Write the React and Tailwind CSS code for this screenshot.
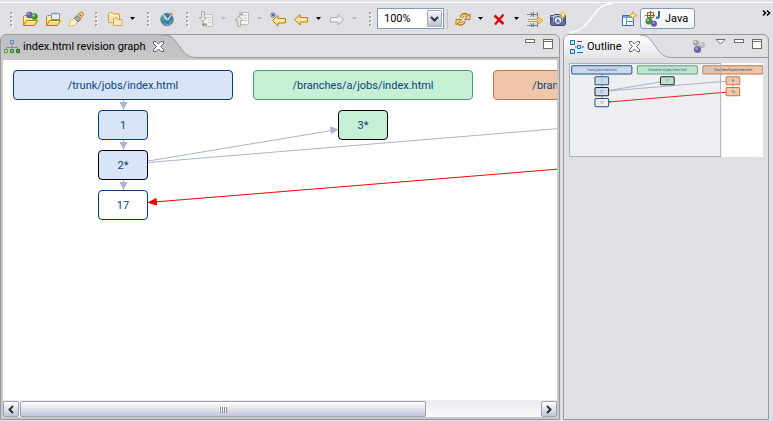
import React from "react";

/* ---------- revision graph data ---------- */

const HEADER_W = 220;
const NODE_W = 50;
const NODE_H = 30;

const PALETTE = {
  blue: { fill: "#d8e4f8", stroke: "#003f77" },
  green: { fill: "#c5f0d5", stroke: "#4ca066" },
  orange: { fill: "#f0c6aa", stroke: "#c07848" },
  blueMark: { fill: "#d8e4f8", stroke: "#000000" },
  greenMark: { fill: "#c5f0d5", stroke: "#000000" },
  plain: { fill: "#ffffff", stroke: "#003f77" },
};

const NODES = [
  { label: "/trunk/jobs/index.html", x: 10, y: 10, w: HEADER_W, tone: "blue" },
  { label: "/branches/a/jobs/index.html", x: 250, y: 10, w: HEADER_W, tone: "green" },
  { label: "/branches/b/jobs/index.html", x: 490, y: 10, w: HEADER_W, tone: "orange" },
  { label: "1", x: 95, y: 50, w: NODE_W, tone: "blue" },
  { label: "2*", x: 95, y: 90, w: NODE_W, tone: "blueMark" },
  { label: "17", x: 95, y: 130, w: NODE_W, tone: "plain" },
  { label: "3*", x: 335, y: 50, w: NODE_W, tone: "greenMark" },
  { label: "8", x: 575, y: 50, w: NODE_W, tone: "orange" },
  { label: "16", x: 575, y: 90, w: NODE_W, tone: "orange" },
];

function Edges() {
  return (
    <g>
      <g stroke="#acb4c8" fill="#acb4c8">
        <path d="M120.5 40V50M120.5 80V90M120.5 120V130M600.5 80V90" vectorEffect="non-scaling-stroke" />
        <path d="M117 42.5h7l-3.5 6zM117 82.5h7l-3.5 6zM117 122.5h7l-3.5 6z" />
        <path d="M145 101L335 69.5M145 102.5L575 67" fill="none" vectorEffect="non-scaling-stroke" />
        <path d="M327.5 67l7 2.5-6 4z" />
      </g>
      <path d="M145 142.500L575 107.500" fill="none" stroke="#ff0000" vectorEffect="non-scaling-stroke" />
      <path d="M153 138.500l-7.500 4 8 2.500z" fill="#ff0000" stroke="#ff0000" />
    </g>
  );
}

const NODE_CLASS = {
  blue: "bg-[#d8e4f8] border-[#003f77]",
  green: "bg-[#c5f0d5] border-[#4ca066]",
  orange: "bg-[#f0c6aa] border-[#c07848]",
  blueMark: "bg-[#d8e4f8] border-black",
  greenMark: "bg-[#c5f0d5] border-black",
  plain: "bg-white border-[#003f77]",
};

function GraphCanvas() {
  return (
    <div id="graph" className="relative min-h-[200px] flex-1 overflow-hidden bg-white">
      <svg className="absolute left-0 top-0" width="720" height="200" aria-hidden="true">
        <Edges />
      </svg>
      {NODES.filter((n) => n.x < 554).map((n) => (
        <div
          key={n.label}
          className={"absolute flex items-center justify-center rounded-[4px] border pt-[2px] text-[#0b4478] " + NODE_CLASS[n.tone]}
          style={{ left: n.x, top: n.y, width: n.w, height: NODE_H }}
        >
          {n.label}
        </div>
      ))}
    </div>
  );
}

function OutlineThumbnail() {
  return (
    <svg className="block w-[194px] bg-white leading-none" viewBox="0 0 710 344" role="img" aria-label="Graph overview">
      <Edges />
      {NODES.map((n) => (
        <g key={n.label}>
          <rect
            x={n.x}
            y={n.y}
            width={n.w}
            height={NODE_H}
            rx="4"
            fill={PALETTE[n.tone].fill}
            stroke={PALETTE[n.tone].stroke}
            vectorEffect="non-scaling-stroke"
          />
          <text x={n.x + n.w / 2} y={n.y + 19} textAnchor="middle" fontSize="11" fill="#0b4478">
            {n.label}
          </text>
        </g>
      ))}
      <rect x="2" y="2" width="553" height="340" fill="#a9adbd" fillOpacity="0.2" stroke="#a9adbd" vectorEffect="non-scaling-stroke" />
    </svg>
  );
}

/* ---------- icons ---------- */

function Icon({ children, size = 16 }) {
  return (
    <svg width={size} height={size} viewBox={`0 0 ${size} ${size}`} className="shrink-0" aria-hidden="true">
      {children}
    </svg>
  );
}

const OpenFolder = () => (
  <g>
    <path d="M1.500 14.500V5.500l1-1h4l1 1.500h6.500v3.500" fill="#fbe9b0" stroke="#c08a28" />
    <path d="M1.500 14.500l3-5h11l-3 5z" fill="#fbd98a" stroke="#b87818" />
    <path d="M5 10.500h9" stroke="#fff3cc" />
  </g>
);

const OpenTypeIcon = () => (
  <Icon>
    <OpenFolder />
    <circle cx="7.500" cy="4" r="3.300" fill="#6a5aa8" />
    <circle cx="6.500" cy="3" r="1.200" fill="#a89cd8" />
    <circle cx="12.500" cy="5.500" r="3.300" fill="#3c9048" />
    <circle cx="11.500" cy="4.500" r="1.200" fill="#98d898" />
  </Icon>
);

const OpenTaskIcon = () => (
  <Icon>
    <OpenFolder />
    <path d="M6.500 2.500h8v6h-8z" fill="#e4ecf8" stroke="#8090b8" />
    <path d="M9 1.500h3v2h-3z" fill="#98a4c0" />
  </Icon>
);

const SearchTorchIcon = () => (
  <Icon>
    <path d="M.500 15L2.500 9l4.500-1.500 2.500 3-3 4z" fill="#fdf4d0" stroke="#e8b850" />
    <path d="M6.500 7l2.500-2.500 4 3.500-3 3z" fill="#a4a8b4" stroke="#6c7080" />
    <path d="M9.500 4.500L12.500 1l2.500.500v3l-2.500 3z" fill="#f8c878" stroke="#c88828" />
    <path d="M11.500 3.500l1.500 1.500" stroke="#2858a8" />
  </Icon>
);

const FoldersIcon = () => (
  <Icon>
    <path d="M1.500 11.500v-9l1-1h3l1 1.500h6v8.500z" fill="#fae2a8" stroke="#d8a050" />
    <path d="M3 4.500h8" stroke="#fff6dc" />
    <path d="M6.500 14.500V8l1-1h2l1 1.500h4.500v6z" fill="#fbeac0" stroke="#d8a050" />
  </Icon>
);

const GlobeIcon = () => (
  <Icon>
    <circle cx="8" cy="8.500" r="6.300" fill="#3078b4" stroke="#7890a0" />
    <path d="M3 5.500l2.500-2 1.500 1L5.500 7l1 2-1 2L3 9.500zM10 10.500l2.500-2 .500 2-2 3z" fill="#58a868" />
    <path d="M4 3.500l4 4-.500 1.500z" fill="#f4f8fc" stroke="#d8e8f0" />
    <path d="M12 4L8.500 9.500" stroke="#e8f0f0" strokeWidth="1.200" />
    <circle cx="12" cy="3" r="1.500" fill="#d09060" />
    <path d="M5 12.500l3 1 3-.500" fill="none" stroke="#78b0dc" />
  </Icon>
);

const GrayDoc = () => (
  <g>
    <path d="M5.500 1.500h9v12h-9z" fill="#f2f2f0" stroke="#c0c0bc" />
    <path d="M10 4.500h3M10 7h3M10 9.500h3" stroke="#c8c8c4" />
  </g>
);

const NextAnnotationIcon = () => (
  <Icon>
    <g transform="translate(0 2)">
      <GrayDoc />
    </g>
    <path d="M3.500.500h3v6h2.500l-4 4.500L1 6.500h2.500z" fill="#e4e4e0" stroke="#b0b0a8" />
    <path d="M4 12.500h5v2h-5z" fill="#90948c" />
  </Icon>
);

const PreviousAnnotationIcon = () => (
  <Icon>
    <GrayDoc />
    <path d="M3.500 15.500h3v-6h2.500l-4-4.500L1 9.500h2.500z" fill="#e4e4e0" stroke="#b0b0a8" />
    <path d="M6 2.500h3v2H6z" fill="#a0a49c" />
  </Icon>
);

const LeftArrow = () => (
  <path d="M1.500 8.500L7 3.500V6.500h7.500v4.500H7v3z" fill="#fbe49c" stroke="#c07c08" strokeLinejoin="round" />
);

const LastEditIcon = () => (
  <Icon>
    <g transform="translate(1 1)">
      <LeftArrow />
      <path d="M7.500 8h6" stroke="#fff8dc" />
    </g>
    <path d="M3 1v6M0 4h6M1 2l4 4M5 2L1 6" stroke="#386088" strokeWidth="0.800" />
  </Icon>
);

const BackIcon = () => (
  <Icon>
    <LeftArrow />
    <path d="M7.500 8h6" stroke="#fff8dc" />
  </Icon>
);

const ForwardIcon = () => (
  <Icon>
    <path d="M14.500 8.500L9 3.500V6.500H1.500v4.500H9v3z" fill="#ececea" stroke="#b0b0aa" strokeLinejoin="round" />
    <path d="M3 8h6" stroke="#ffffff" />
  </Icon>
);

const RefreshIcon = () => (
  <Icon>
    <g fill="none" strokeLinejoin="round">
      <path d="M6.500 6.500C7 3.500 10 2.500 12.500 5" stroke="#b47810" strokeWidth="3.500" />
      <path d="M9.500 8.500h5.500V3z" fill="#fbd878" stroke="#b47810" />
      <path d="M6.500 6.200C7.200 3.800 10 3 12.500 5.500" stroke="#fbd878" strokeWidth="1.500" />
      <path d="M9 10C8.500 13 5.500 14 3.500 12" stroke="#b47810" strokeWidth="3.500" />
      <path d="M6.500 8.500H1V14z" fill="#fbd878" stroke="#b47810" />
      <path d="M9 10.300C8.300 12.700 5.500 13.500 3.500 11.500" stroke="#fbd878" strokeWidth="1.500" />
    </g>
  </Icon>
);

const DeleteIcon = () => (
  <Icon>
    <path d="M3.500 4.500l9 8.500" stroke="#d01010" strokeWidth="2.600" />
    <path d="M12.500 3.500L4 13.500" stroke="#d01010" strokeWidth="2.200" />
  </Icon>
);

const FilterConnectionsIcon = () => (
  <Icon>
    <path d="M0 3.500h10M0 14.500h10" stroke="#708090" />
    <path d="M3.500 1.500l2.500 2-2.500 2M3.500 12.500l2.500 2-2.500 2" fill="none" stroke="#60707c" />
    <path d="M6.500 1v5M6.500 12v4M10.500 1v4.500M10.500 12.500V16" stroke="#708090" />
    <path d="M1 8.500h9.500M1 10.500h9.500" stroke="#d89828" />
    <path d="M1 9.500h9.500" stroke="#fdf0c0" />
    <path d="M10.500 5.500l5 4-5 4v-2.500l1.500-1.500-1.500-1.500z" fill="#fce4a0" stroke="#d08c18" strokeLinejoin="round" />
  </Icon>
);

const CameraIcon = () => (
  <Icon>
    <path d="M.500 4.500h3l1-1h6l1 1h4v9l-1 1h-13l-1-1z" fill="#b8c0dc" stroke="#404c78" />
    <path d="M1 11h14v3H1z" fill="#6874a0" />
    <path d="M1 6h2v5H1zM13 6h2v5h-2z" fill="#50608c" />
    <circle cx="8" cy="9.500" r="4" fill="#eef2fc" stroke="#404c78" />
    <path d="M8 7l2.500 4.500h-5z" fill="#6c7cac" />
    <path d="M13 0v8M9.500 4h6.500M10.500 1.500l5 5M15.500 1.500l-5 5" stroke="#e8c420" />
    <circle cx="13" cy="4" r="1.200" fill="#fff8a0" />
  </Icon>
);

const OpenPerspectiveIcon = () => (
  <Icon>
    <path d="M1.500 4.500h11v10h-11z" fill="#f4f8fc" stroke="#486c90" />
    <path d="M2 5h10v2H2z" fill="#78a0c8" />
    <path d="M5.500 7v7M5.500 10.500h7" stroke="#6890b0" />
    <path d="M12 .500l1.200 2.800L16 4.500l-2.800 1.200L12 8.500l-1.200-2.800L8 4.500l2.800-1.200z" fill="#fdf0a0" stroke="#c09018" strokeWidth="0.800" />
  </Icon>
);

const JavaIcon = () => (
  <Icon>
    <path d="M2.500 1.500h6v5h-6zM5.500 0v8M0 4.500h10" fill="#f8e0c0" stroke="#a05c30" />
    <circle cx="4" cy="10" r="3.500" fill="#389048" />
    <circle cx="3" cy="9" r="1.200" fill="#98d8a0" />
    <circle cx="9" cy="12.800" r="3" fill="#6c58a8" />
    <circle cx="8.300" cy="11.800" r="1" fill="#b0a0dc" />
    <path d="M14 0v5c0 1.500-1 2-3 1.500" fill="none" stroke="#2868a8" strokeWidth="2" />
  </Icon>
);

const GraphIcon = () => (
  <Icon>
    <path d="M8 5v3M2.500 10V8.500h11V10" fill="none" stroke="#8c8c8c" />
    <path d="M6.500 1.500h3v3h-3z" fill="#a8ccf4" stroke="#5888c8" />
    <path d="M.500 10.500h3v3h-3z" fill="#b8e8a0" stroke="#50a040" />
    <path d="M6.500 10.500h3v3h-3z" fill="#70c060" stroke="#38883c" />
    <path d="M12.500 10.500h3v3h-3z" fill="#50a848" stroke="#207828" />
  </Icon>
);

const OutlineIcon = () => (
  <Icon>
    <path d="M2.500 1.500h4v4h-4zM2.500 10.500h4v4h-4z" fill="#c8e4f8" stroke="#1470b0" />
    <path d="M9 2.500h5M9 13.500h6M7 8h1.500M13.500 8H16" stroke="#1c609c" />
    <path d="M9.500 6.500h3v3h-3z" fill="#e8f4fc" stroke="#1470b0" />
  </Icon>
);

const FilterBallsIcon = () => (
  <Icon>
    <circle cx="5" cy="4" r="3" fill="#a8a8a8" />
    <circle cx="4.300" cy="3.300" r="1" fill="#e0e0e0" />
    <circle cx="11" cy="6" r="3" fill="#b8b8b8" />
    <circle cx="10.300" cy="5.300" r="1" fill="#eeeeee" />
    <circle cx="6.500" cy="10.500" r="3.600" fill="#7060a8" />
    <circle cx="5.500" cy="9.500" r="1.300" fill="#b0a4dc" />
  </Icon>
);

const CloseGlyph = () => (
  <svg width="11" height="11" viewBox="0 0 11 11" aria-hidden="true">
    <path
      d="M.500.500h2.500l2.500 2.500L8 .500h2.500v2L7.500 5.500l3 3v2H8L5.500 8 3 10.500H.500v-2l3-3-3-3z"
      fill="#ffffff"
      stroke="#606058"
    />
  </svg>
);

/* ---------- toolbar parts ---------- */

function Grip() {
  return (
    <div className="flex w-4 shrink-0 flex-col gap-[2px] pl-2" aria-hidden="true">
      <i className="size-[2px] bg-[#a4a49e] shadow-[1px_1px_0_#ffffff]" />
      <i className="size-[2px] bg-[#a4a49e] shadow-[1px_1px_0_#ffffff]" />
      <i className="size-[2px] bg-[#a4a49e] shadow-[1px_1px_0_#ffffff]" />
      <i className="size-[2px] bg-[#a4a49e] shadow-[1px_1px_0_#ffffff]" />
    </div>
  );
}

function Tool({ label, disabled, children }) {
  return (
    <button type="button" aria-label={label} disabled={disabled} className="flex h-5 w-[23px] shrink-0 items-center justify-center">
      {children}
    </button>
  );
}

function Drop({ label, disabled }) {
  return (
    <button
      type="button"
      aria-label={label}
      disabled={disabled}
      className="flex h-5 w-[13px] shrink-0 items-center justify-center text-black disabled:text-[#bcbcb4]"
    >
      <svg width="5" height="3" viewBox="0 0 5 3" aria-hidden="true">
        <path d="M0 0h5L2.500 3z" fill="currentColor" />
      </svg>
    </button>
  );
}

function Toolbar() {
  return (
    <header className="border-t-2 border-[#dfe2ec]">
      <div className="flex h-8 items-center border-t border-white px-[2px]">
        <Grip />
        <Tool label="Open type"><OpenTypeIcon /></Tool>
        <Tool label="Open task"><OpenTaskIcon /></Tool>
        <Tool label="Search"><SearchTorchIcon /></Tool>
        <Grip />
        <Tool label="Working sets"><FoldersIcon /></Tool>
        <Drop label="Working set menu" />
        <Grip />
        <Tool label="Web browser"><GlobeIcon /></Tool>
        <Grip />
        <Tool label="Next annotation" disabled><NextAnnotationIcon /></Tool>
        <Drop label="Next annotation menu" disabled />
        <Tool label="Previous annotation" disabled><PreviousAnnotationIcon /></Tool>
        <Drop label="Previous annotation menu" disabled />
        <Tool label="Last edit location"><LastEditIcon /></Tool>
        <Tool label="Back"><BackIcon /></Tool>
        <Drop label="Back menu" />
        <Tool label="Forward" disabled><ForwardIcon /></Tool>
        <Drop label="Forward menu" disabled />
        <Grip />
        <div className="relative w-[67px] shrink-0">
          <select
            aria-label="Zoom"
            defaultValue="100%"
            className="block h-[21px] w-full appearance-none rounded-none border border-[#7f9db9] bg-white pl-[6px] text-[11px] leading-[14px] text-black"
          >
            <option>50%</option>
            <option>100%</option>
            <option>200%</option>
          </select>
          <span className="pointer-events-none absolute bottom-[2px] right-[2px] top-[2px] flex w-[15px] items-center justify-center rounded-[1px] border border-[#a8abbc] bg-linear-to-b from-[#f4f4f8] to-[#c0c2d2]">
            <svg width="9" height="6" viewBox="0 0 9 6" aria-hidden="true">
              <path d="M1 1l3.500 3.500L8 1" fill="none" stroke="#303038" strokeWidth="2" />
            </svg>
          </span>
        </div>
        <div className="flex h-5 w-[7px] shrink-0 pl-[3px]"><i className="w-px bg-[#c0c0c4]" /></div>
        <Tool label="Refresh"><RefreshIcon /></Tool>
        <Drop label="Refresh menu" />
        <Tool label="Remove"><DeleteIcon /></Tool>
        <Drop label="Remove menu" />
        <Tool label="Filter connections"><FilterConnectionsIcon /></Tool>
        <Tool label="Export image"><CameraIcon /></Tool>
        <svg className="h-[31px] w-[48px] shrink-0" viewBox="0 0 48 31" aria-hidden="true">
          <path d="M0 29.500C12 29 17 22 24 13C30 5 34 1 43 .500" fill="none" stroke="#ffffff" strokeWidth="1.500" />
        </svg>
        <Tool label="Open perspective"><OpenPerspectiveIcon /></Tool>
        <button
          type="button"
          className="flex h-[21px] shrink-0 items-center gap-1 rounded-[3px] border border-[#7f9db9] bg-linear-to-b from-white to-[#f0f0f4] px-[4px] pr-[6px] text-black"
        >
          <JavaIcon />
          Java
        </button>
        <button type="button" aria-label="More perspectives" className="mb-3 ml-auto flex h-3 w-[9px] shrink-0 items-center">
          <svg width="9" height="6" viewBox="0 0 9 6" aria-hidden="true">
            <path d="M1 .500l2.500 2.500L1 5.500M5 .500L7.500 3 5 5.500" fill="none" stroke="#000000" strokeWidth="1.500" />
          </svg>
        </button>
      </div>
    </header>
  );
}

/* ---------- view frames ---------- */

function FrameButtons() {
  return (
    <>
      <button type="button" aria-label="Minimize" className="flex h-[10px] w-[10px] items-start">
        <i className="h-[4px] w-full border border-[#6e6e60] bg-white" />
      </button>
      <button type="button" aria-label="Maximize" className="flex size-[10px] border border-[#6e6e60] bg-white pt-px">
        <i className="h-px w-full bg-[#6e6e60]" />
      </button>
    </>
  );
}

function EditorView() {
  return (
    <section className="flex min-w-0 flex-1 flex-col overflow-hidden rounded-t-[6px] border border-[#98989e] bg-[#c8c8c8]">
      <div className="flex h-[23px]">
        <div className="flex shrink-0 items-center gap-[3px] bg-linear-to-b from-[#bebec2] to-[#c8c8c8] pl-[3px]">
          <GraphIcon />
          <h1 className="whitespace-nowrap text-black">index.html revision graph</h1>
          <button type="button" aria-label="Close editor" className="ml-1 flex size-[11px]">
            <CloseGlyph />
          </button>
        </div>
        <div className="flex min-w-0 flex-1 bg-[#e0dfe4]">
          <svg className="h-[23px] w-8 shrink-0" viewBox="0 0 32 23" aria-hidden="true">
            <path d="M0 0C9 0 11 6 16 12C20 18 24 22.500 32 22.500V23H0z" fill="#c3c3c5" />
            <path d="M0 0C9 0 11 6 16 12C20 18 24 22.500 32 22.500" fill="none" stroke="#98989e" />
          </svg>
          <div className="flex flex-1 items-start justify-end gap-2 border-b border-[#98989e] pr-[6px] pt-1">
            <FrameButtons />
          </div>
        </div>
      </div>
      <div className="flex flex-1 flex-col p-[2px]">
        <GraphCanvas />
        <HorizontalScrollbar />
      </div>
    </section>
  );
}

function HorizontalScrollbar() {
  const cap =
    "flex h-4 w-4 shrink-0 items-center justify-center rounded-[2px] border border-[#9ea1b4] bg-linear-to-b from-white to-[#c4c5d6]";
  return (
    <div className="flex h-[17px] items-end bg-linear-to-b from-[#ebebf0] to-[#fafafc]">
      <button type="button" aria-label="Scroll left" className={cap}>
        <svg width="6" height="9" viewBox="0 0 6 9" aria-hidden="true">
          <path d="M5 1L1.500 4.500 5 8" fill="none" stroke="#303030" strokeWidth="2" />
        </svg>
      </button>
      <div className="flex min-w-0 flex-1 pl-px">
        <div
          role="scrollbar"
          aria-label="Graph position"
          aria-controls="graph"
          aria-valuenow={0}
          className="flex h-4 w-[78%] items-center justify-center rounded-[2px] border border-[#9ea1b4] bg-linear-to-b from-white to-[#c4c5d6]"
        >
          <svg width="8" height="7" viewBox="0 0 8 7" aria-hidden="true" shapeRendering="crispEdges">
            <path d="M.500 0v6M2.500 0v6M4.500 0v6M6.500 0v6" stroke="#ffffff" />
            <path d="M1.500 1v6M3.500 1v6M5.500 1v6M7.500 1v6" stroke="#888ca4" />
          </svg>
        </div>
      </div>
      <button type="button" aria-label="Scroll right" className={cap}>
        <svg width="6" height="9" viewBox="0 0 6 9" aria-hidden="true">
          <path d="M1 1l3.500 3.500L1 8" fill="none" stroke="#303030" strokeWidth="2" />
        </svg>
      </button>
    </div>
  );
}

function OutlineView() {
  return (
    <section className="flex w-[206px] shrink-0 flex-col overflow-hidden rounded-t-[6px] border border-[#98989e] bg-[#e0dfe4]">
      <div className="flex h-[23px]">
        <div className="flex shrink-0 items-center gap-[3px] bg-linear-to-b from-white to-[#e4e4e8] pl-[4px]">
          <OutlineIcon />
          <h2 className="whitespace-nowrap text-black">Outline</h2>
          <button type="button" aria-label="Close outline" className="ml-1 flex size-[11px]">
            <CloseGlyph />
          </button>
        </div>
        <svg className="h-[23px] w-8 shrink-0" viewBox="0 0 32 23" aria-hidden="true">
          <defs>
            <linearGradient id="outline-tab" x1="0" y1="0" x2="0" y2="1">
              <stop offset="0" stopColor="#ffffff" />
              <stop offset="1" stopColor="#e4e4e8" />
            </linearGradient>
          </defs>
          <path d="M0 0C9 0 11 6 16 12C20 18 24 22.500 32 22.500V23H0z" fill="url(#outline-tab)" />
          <path d="M0 0C9 0 11 6 16 12C20 18 24 22.500 32 22.500" fill="none" stroke="#98989e" />
        </svg>
        <div className="flex flex-1 items-start justify-end gap-2 border-b border-[#98989e] pr-[6px] pt-1">
          <button type="button" aria-label="Filters" className="flex size-4">
            <FilterBallsIcon />
          </button>
          <button type="button" aria-label="View menu" className="flex h-[10px] w-[11px] items-start">
            <svg width="11" height="6" viewBox="0 0 11 6" aria-hidden="true">
              <path d="M1 .500h9L5.500 5z" fill="#ffffff" stroke="#6e6e60" />
            </svg>
          </button>
          <FrameButtons />
        </div>
      </div>
      <div className="flex-1 p-[5px]">
        <OutlineThumbnail />
      </div>
    </section>
  );
}

export default function App() {
  return (
    <div className="flex min-h-screen flex-col overflow-hidden bg-[#e0dfe4] font-[Roboto,'Noto_Sans',sans-serif] text-[11px] leading-[14px]">
      <Toolbar />
      <main className="flex flex-1 gap-[3px] pb-px pr-1">
        <EditorView />
        <OutlineView />
      </main>
    </div>
  );
}
